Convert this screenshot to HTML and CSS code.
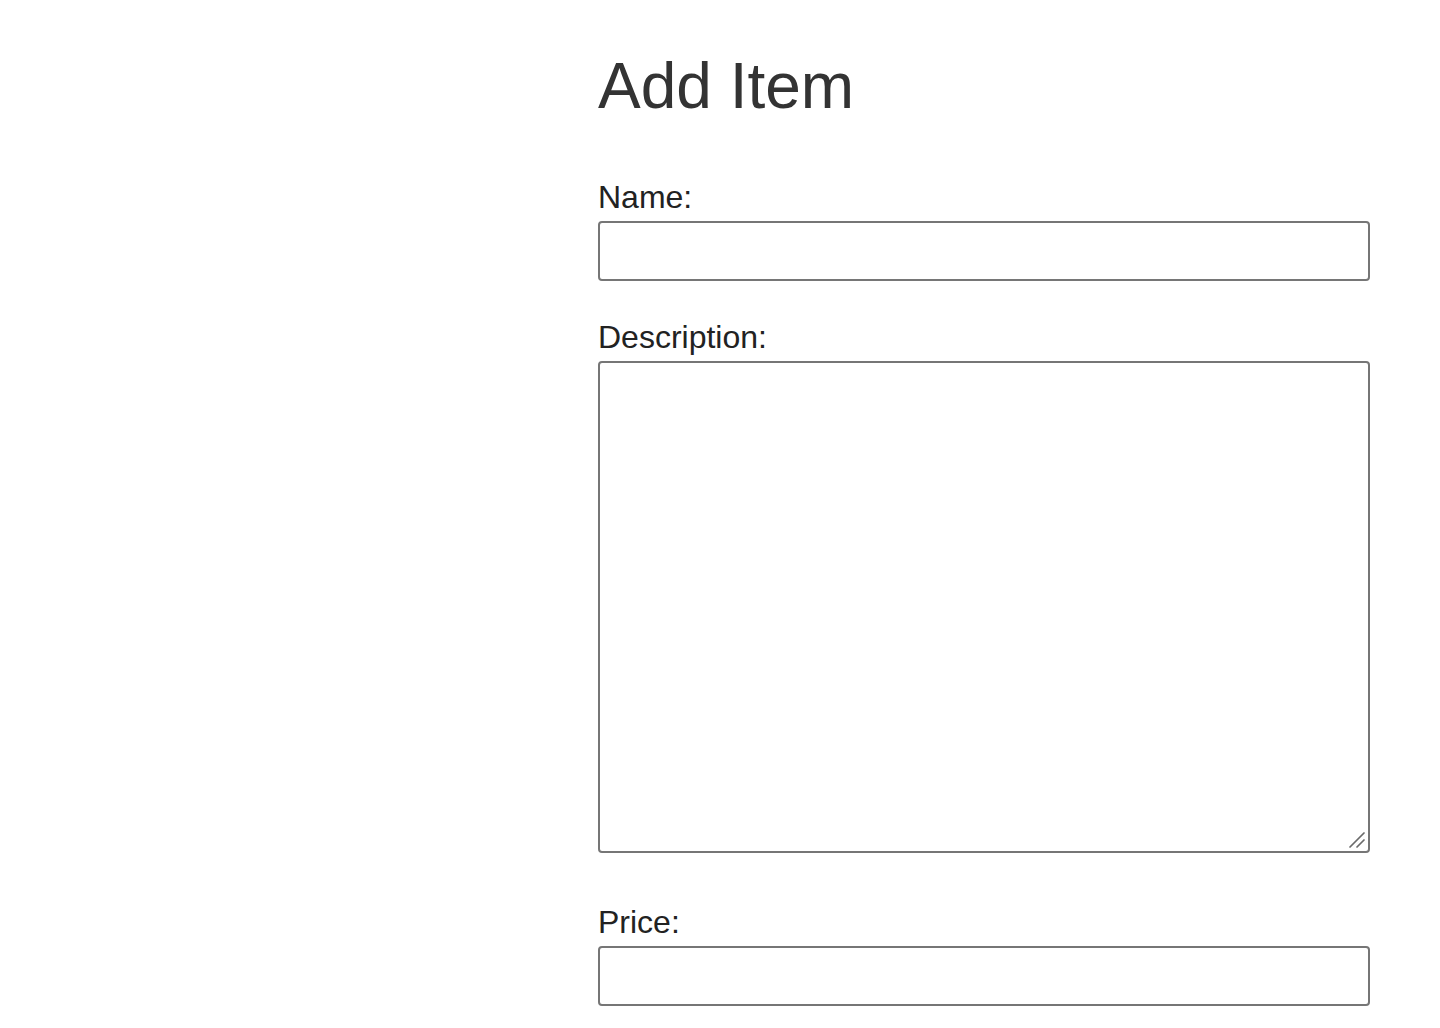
FILE: index.html
```html
<!DOCTYPE html>
<html lang="en">
<head>
<meta charset="utf-8">
<title>Add Item</title>
<link rel="stylesheet" href="styles.css">
</head>
<body>
<main class="page">
  <section class="form-wrap">
    <h1 class="title">Add Item</h1>
    <form class="item-form">
      <div class="field">
        <label class="label" for="name">Name:</label>
        <input class="control" id="name" type="text">
      </div>
      <div class="field field-area">
        <label class="label" for="description">Description:</label>
        <div class="area-wrap">
          <textarea class="control area" id="description"></textarea>
          <svg class="grip" width="20" height="20" viewBox="0 0 20 20" aria-hidden="true">
            <line x1="2" y1="16" x2="16" y2="2" />
            <line x1="9" y1="16" x2="16" y2="9" />
          </svg>
        </div>
      </div>
      <div class="field">
        <label class="label" for="price">Price:</label>
        <input class="control" id="price" type="text">
      </div>
    </form>
  </section>
</main>
</body>
</html>
```
FILE: styles.css
```css
html, body {
  margin: 0;
  padding: 0;
  background: #ffffff;
}

body {
  font-family: "Liberation Sans", Arial, sans-serif;
  color: #222222;
}

.page {
  display: grid;
  grid-template-columns: 598px 772px;
  padding-top: 49px;
}

.form-wrap {
  grid-column: 2;
}

.title {
  margin: 0 0 56px;
  font-size: 64px;
  line-height: 74px;
  font-weight: 400;
  color: #333333;
}

.item-form {
  display: flex;
  flex-direction: column;
  gap: 38px;
}

.field-area {
  margin-bottom: 13px;
}

.label {
  display: block;
  font-size: 32px;
  line-height: 37px;
  margin-bottom: 5px;
  color: #222222;
}

.control {
  display: block;
  box-sizing: border-box;
  width: 772px;
  height: 60px;
  margin: 0;
  border: 2px solid #767676;
  border-radius: 4px;
  background: #ffffff;
  font-family: "Liberation Sans", Arial, sans-serif;
  font-size: 26px;
  padding: 4px 8px;
}

.area-wrap {
  position: relative;
  width: 772px;
}

.area {
  height: 492px;
  resize: none;
}

.grip {
  position: absolute;
  right: 2px;
  bottom: 2px;
  pointer-events: none;
}

.grip line {
  stroke: #6b6b6b;
  stroke-width: 1.7;
  stroke-linecap: round;
}
```
